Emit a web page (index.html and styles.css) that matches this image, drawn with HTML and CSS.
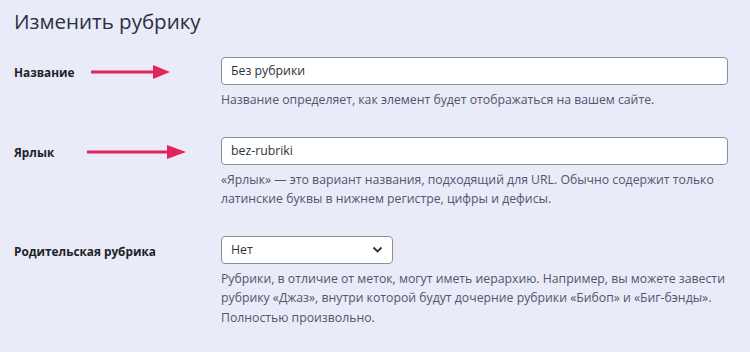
FILE: index.html
```html
<!DOCTYPE html>
<html lang="ru">
<head>
<meta charset="utf-8">
<link rel="stylesheet" href="styles.css">
</head>
<body>
<div class="page">
  <h1 class="title">Изменить рубрику</h1>
  <div class="form">
    <div class="row">
      <label class="label">Название</label>
      <div class="field">
        <div class="input">Без рубрики</div>
        <p class="desc">Название определяет, как элемент будет отображаться на вашем сайте.</p>
      </div>
      <svg class="arrow a1" width="80" height="16" viewBox="0 0 80 16"><line x1="1" y1="8" x2="66" y2="8" stroke="#e0245e" stroke-width="3" stroke-linecap="round"/><polygon points="62,1 79,8 62,15" fill="#e0245e"/></svg>
    </div>
    <div class="row">
      <label class="label">Ярлык</label>
      <div class="field">
        <div class="input">bez-rubriki</div>
        <p class="desc">«Ярлык» — это вариант названия, подходящий для URL. Обычно содержит только латинские буквы в нижнем регистре, цифры и дефисы.</p>
      </div>
      <svg class="arrow a2" width="100" height="16" viewBox="0 0 100 16"><line x1="1" y1="8" x2="84" y2="8" stroke="#e0245e" stroke-width="3" stroke-linecap="round"/><polygon points="80,1 99,8 80,15" fill="#e0245e"/></svg>
    </div>
    <div class="row">
      <label class="label">Родительская рубрика</label>
      <div class="field">
        <div class="select"><span>Нет</span><svg width="11" height="7" viewBox="0 0 11 7"><path d="M1.5 1.5 L5.5 5.5 L9.5 1.5" fill="none" stroke="#2c3338" stroke-width="1.8"/></svg></div>
        <p class="desc">Рубрики, в отличие от меток, могут иметь иерархию. Например, вы можете завести рубрику «Джаз», внутри которой будут дочерние рубрики «Бибоп» и «Биг-бэнды». Полностью произвольно.</p>
      </div>
    </div>
  </div>
</div>
</body>
</html>
```

FILE: styles.css
```css
html, body {
  margin: 0;
  padding: 0;
  background: #e9ebf8;
}
body {
  font-family: "Open Sans", "Noto Sans", "Liberation Sans", sans-serif;
  color: #1d2327;
}
.page {
  padding: 6px 22px 0 14px;
}
.title {
  margin: 0;
  font-size: 20.5px;
  font-weight: 400;
  line-height: 30px;
  color: #2b3040;
}
.form {
  padding-top: 21px;
}
.row {
  position: relative;
  display: grid;
  grid-template-columns: 207px 1fr;
  margin-bottom: 27px;
}
.label {
  font-size: 11.8px;
  font-weight: 700;
  line-height: 28px;
  padding-top: 1px;
  color: #1d2327;
}
.input, .select {
  box-sizing: border-box;
  height: 28px;
  background: #fff;
  border: 1px solid #8c8f94;
  border-radius: 4px;
  font-size: 12.3px;
  line-height: 26px;
  padding: 0 9px;
  color: #2c3338;
}
.select {
  width: 172px;
  display: flex;
  justify-content: space-between;
  align-items: center;
  padding-right: 9px;
}
.desc {
  margin: 5px 0 0;
  font-size: 12.25px;
  line-height: 19.5px;
  color: #50566e;
}
.arrow {
  position: absolute;
}
.a1 { left: 77px; top: 7px; }
.a2 { left: 73px; top: 7px; }
```
